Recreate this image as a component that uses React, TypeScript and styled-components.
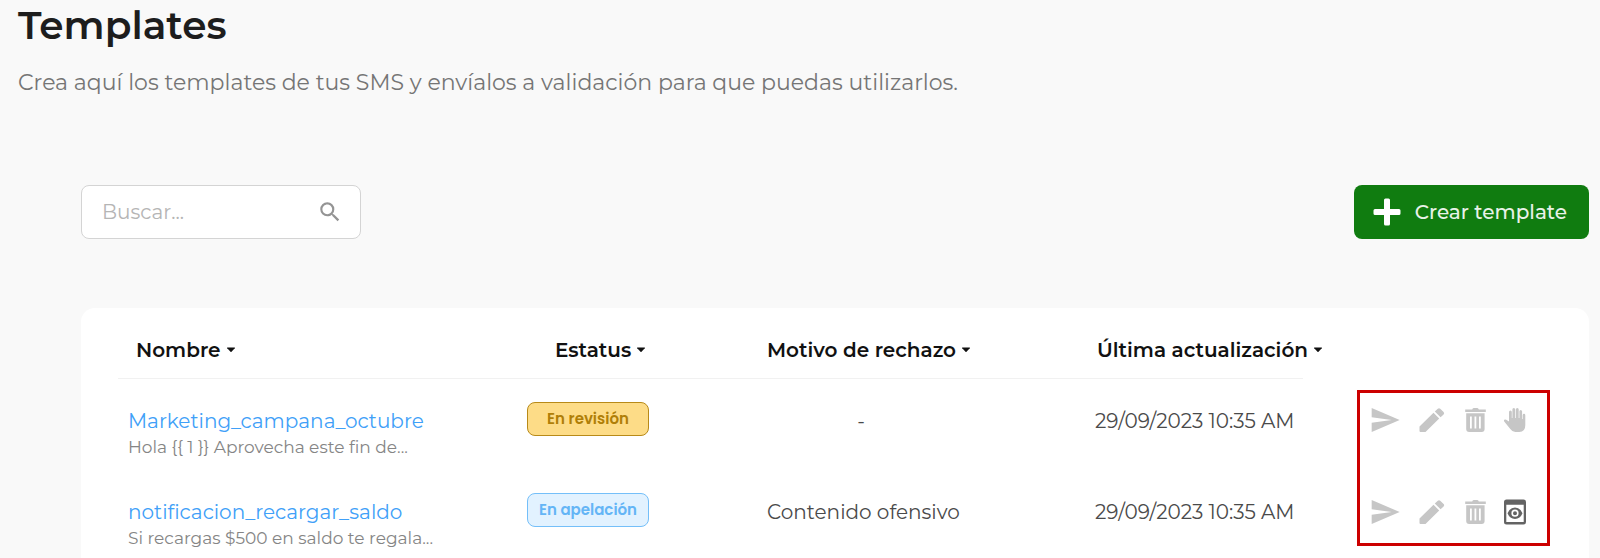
import React from "react";
import styled, { createGlobalStyle } from "styled-components";
import { MdSend, MdSearch } from "react-icons/md";

const GlobalStyle = createGlobalStyle`
  * { box-sizing: border-box; }
  body { margin: 0; background: #f9f9f9; color: #1d1d1d; font-family: Montserrat, Inter, sans-serif; }
  button, input { font: inherit; }
  button { cursor: pointer; }
`;

const Page = styled.main`
  padding: 3px 11px 0 18px;
  min-height: 100vh;
  display: flex;
  flex-direction: column;
`;
const Title = styled.h1`
  margin: 0;
  font-size: 39px;
  line-height: 44px;
  font-weight: 600;
`;
const Subtitle = styled.p`
  margin: 22px 0 0;
  font-size: 22px;
  line-height: 28px;
  color: #757575;
`;
const Toolbar = styled.div`
  margin: 88px 0 0 63px;
  display: flex;
  justify-content: space-between;
  align-items: center;
`;
const SearchBox = styled.label`
  display: flex;
  align-items: center;
  width: 280px;
  height: 54px;
  padding: 0 17px 0 20px;
  border: 1px solid #d4d4d4;
  border-radius: 8px;
  background: #fff;
  color: #949494;
`;
const SearchInput = styled.input`
  flex: 1;
  min-width: 0;
  border: 0;
  padding: 0;
  outline: 0;
  background: none;
  font-size: 20px;
  &::placeholder { color: #b5b5b5; opacity: 1; }
`;
const CreateButton = styled.button`
  display: flex;
  align-items: center;
  gap: 14px;
  height: 54px;
  padding: 0 22px 0 19px;
  border: 0;
  border-radius: 8px;
  background: #107c10;
  color: #e8f2e8;
  font-size: 20px;
  font-weight: 500;
`;
const Card = styled.section`
  flex: 1;
  margin: 69px 0 0 63px;
  padding: 14px 39px 0 37px;
  border-radius: 14px 14px 0 0;
  background: #fff;
`;
const Table = styled.table`
  width: 100%;
  border-collapse: collapse;
  table-layout: fixed;
`;
const Col = styled.col<{ $w?: number }>`
  ${({ $w }) => ($w ? `width: ${$w}px;` : "")}
`;
const Th = styled.th<{ $pad: number }>`
  height: 56px;
  padding: 0 0 0 ${({ $pad }) => $pad}px;
  text-align: left;
  border-bottom: 1px solid #f1f1f1;
`;
const EmptyHead = styled.td`
  padding: 0;
`;
const SortButton = styled.button`
  display: flex;
  align-items: center;
  gap: 5px;
  padding: 0;
  border: 0;
  background: none;
  color: #111;
  font-size: 20px;
  line-height: 24px;
  font-weight: 600;
  white-space: nowrap;
`;
const Td = styled.td<{ $pad?: number }>`
  height: 80px;
  padding: 0 0 0 ${({ $pad = 0 }) => $pad}px;
  vertical-align: top;
  color: #4a4a4a;
  font-size: 20px;
  line-height: 24px;
  white-space: nowrap;
`;
const CellText = styled.div`
  padding-top: 30px;
`;
const Reason = styled(CellText)`
  width: 188px;
  text-align: center;
`;
const NameLink = styled.a`
  display: block;
  padding-top: 30px;
  color: #40a0f8;
  text-decoration: none;
`;
const Preview = styled.div`
  margin-top: 3px;
  font-size: 17px;
  line-height: 22px;
  color: #858585;
`;
const Badge = styled.div<{ $tone: "amber" | "blue" }>`
  margin-top: 23px;
  width: 122px;
  height: 34px;
  border: 1px solid ${({ $tone }) => ($tone === "amber" ? "#b88a18" : "#74bff9")};
  border-radius: 8px;
  background: ${({ $tone }) => ($tone === "amber" ? "#fddc87" : "#e2f2ff")};
  color: ${({ $tone }) => ($tone === "amber" ? "#b07f08" : "#64b5f6")};
  font-family: Poppins, Inter, sans-serif;
  font-size: 15px;
  line-height: 32px;
  font-weight: 600;
  text-align: center;
`;
const Actions = styled.div<{ $edge: "top" | "bottom" }>`
  display: flex;
  align-items: flex-start;
  gap: 16px;
  width: 193px;
  height: ${({ $edge }) => ($edge === "top" ? 80 : 76)}px;
  margin-top: ${({ $edge }) => ($edge === "top" ? 12 : 0)}px;
  padding: ${({ $edge }) => ($edge === "top" ? 11 : 26)}px 0 0 9px;
  border: 3px solid #cc0000;
  border-${({ $edge }) => ($edge === "top" ? "bottom" : "top")}: 0;
`;
const IconButton = styled.button<{ $dark?: boolean }>`
  display: flex;
  align-items: center;
  height: 32px;
  padding: 0;
  border: 0;
  background: none;
  color: ${({ $dark }) => ($dark ? "#636363" : "#c6c6c6")};
`;

const Caret = () => (
  <svg width="10" height="6" viewBox="0 0 10 6" aria-hidden="true">
    <path d="M1.500 .5h7q.9 0 .3.800L5.500 4.800q-.5.500-1 0L1.200 1.300Q.6.5 1.500.5z" fill="#111" />
  </svg>
);
const Plus = () => (
  <svg width="28" height="28" viewBox="0 0 28 28" aria-hidden="true">
    <path d="M12.500.5h3q1.500 0 1.500 1.500v9h9q1.500 0 1.500 1.500v3q0 1.500-1.500 1.500h-9v9q0 1.500-1.500 1.500h-3q-1.500 0-1.500-1.500v-9H2q-1.500 0-1.500-1.500v-3Q.5 11 2 11h9V2q0-1.500 1.500-1.500z" fill="#fff" />
  </svg>
);
const Pencil = () => (
  <svg width="32" height="32" viewBox="0 0 32 32" aria-hidden="true">
    <path d="M2.500 27v-4.500L16.500 8.800l5.700 5.700L8.500 28H3.500q-1 0-1-1zM17.800 7.500l3-2.800q1.200-1.100 2.400 0l3.400 3.400q1.100 1.200 0 2.400l-3 2.800z" fill="currentColor" />
  </svg>
);
const Trash = () => (
  <svg width="22" height="26" viewBox="0 0 22 26" aria-hidden="true">
    <path d="M.2 2.500h7q.3-1.500 1.500-1.500h3.600q1.200 0 1.500 1.500h7v2.600H.2z" fill="currentColor" />
    <path fillRule="evenodd" d="M1.200 6.300h18.400V22q0 3-3 3H4.200q-3 0-3-3zM5 9.500v12h1.800v-12zM9.500 9.500v12h1.800v-12zM14 9.500v12h1.800v-12z" fill="currentColor" />
  </svg>
);
const Hand = () => (
  <svg width="24" height="28" viewBox="0 0 24 28" aria-hidden="true">
    <path d="M6 15.500V6q0-1.500 1.400-1.500T8.800 6v6h.6V3.400q0-1.500 1.400-1.500t1.400 1.500V12h.7V3.400q0-1.500 1.400-1.500t1.400 1.500V12h.7V5.500q0-1.500 1.300-1.500t1.400 1.500V13h.6V9.200q0-1.400 1.300-1.400t1.300 1.400V19q0 7-6 7h-4q-3 0-5-3L1.200 15.500q-.8-1.400.5-1.900 1.300-.3 2.300.6z" fill="currentColor" />
  </svg>
);
const View = () => (
  <svg width="24" height="28" viewBox="0 0 24 28" aria-hidden="true">
    <path fillRule="evenodd" d="M3.500 1.500h17q2.500 0 2.500 2.500v20q0 2.500-2.500 2.500h-17Q1 26.500 1 24V4q0-2.500 2.500-2.500zM3.300 6.800v17.300h17.400V6.800z" fill="currentColor" />
    <path fillRule="evenodd" d="M12 9.500q5.200 0 7.500 5.700-2.300 5.700-7.500 5.700t-7.500-5.700Q6.800 9.500 12 9.500zm0 2.100a3.600 3.600 0 1 0 0 7.200 3.600 3.600 0 1 0 0-7.200zm0 1.600a2 2 0 1 1 0 4 2 2 0 1 1 0-4z" fill="currentColor" />
  </svg>
);

type Row = { name: string; text: string; status: string; tone: "amber" | "blue"; reason: string; date: string; action: string };
const rows: Row[] = [
  { name: "Marketing_campana_octubre", text: "Hola {{ 1 }} Aprovecha este fin de...", status: "En revisión", tone: "amber", reason: "-", date: "29/09/2023 10:35 AM", action: "Apelar" },
  { name: "notificacion_recargar_saldo", text: "Si recargas $500 en saldo te regala...", status: "En apelación", tone: "blue", reason: "Contenido ofensivo", date: "29/09/2023 10:35 AM", action: "Ver" },
];
const heads = [
  { label: "Nombre", pad: 18 },
  { label: "Estatus", pad: 28 },
  { label: "Motivo de rechazo", pad: 0 },
  { label: "Última actualización", pad: 2 },
];

export default function App() {
  return (
    <Page>
      <GlobalStyle />
      <Title>Templates</Title>
      <Subtitle>Crea aquí los templates de tus SMS y envíalos a validación para que puedas utilizarlos.</Subtitle>
      <Toolbar>
        <SearchBox>
          <SearchInput type="text" placeholder="Buscar..." aria-label="Buscar" />
          <MdSearch size={26} />
        </SearchBox>
        <CreateButton type="button"><Plus />Crear template</CreateButton>
      </Toolbar>
      <Card>
        <Table>
          <colgroup>
            <Col /><Col $w={240} /><Col $w={328} /><Col $w={208} /><Col $w={247} />
          </colgroup>
          <thead>
            <tr>
              {heads.map((h) => (
                <Th key={h.label} scope="col" $pad={h.pad}>
                  <SortButton type="button">{h.label}<Caret /></SortButton>
                </Th>
              ))}
              <EmptyHead />
            </tr>
          </thead>
          <tbody>
            {rows.map((r, i) => (
              <tr key={r.name}>
                <Td $pad={10}>
                  <NameLink href="#">{r.name}</NameLink>
                  <Preview>{r.text}</Preview>
                </Td>
                <Td><Badge $tone={r.tone}>{r.status}</Badge></Td>
                <Td><Reason>{r.reason}</Reason></Td>
                <Td><CellText>{r.date}</CellText></Td>
                <Td $pad={54}>
                  <Actions $edge={i === 0 ? "top" : "bottom"}>
                    <IconButton type="button" aria-label="Enviar"><MdSend size={32} /></IconButton>
                    <IconButton type="button" aria-label="Editar"><Pencil /></IconButton>
                    <IconButton type="button" aria-label="Eliminar"><Trash /></IconButton>
                    <IconButton type="button" aria-label={r.action} $dark={r.action === "Ver"}>
                      {r.action === "Ver" ? <View /> : <Hand />}
                    </IconButton>
                  </Actions>
                </Td>
              </tr>
            ))}
          </tbody>
        </Table>
      </Card>
    </Page>
  );
}
